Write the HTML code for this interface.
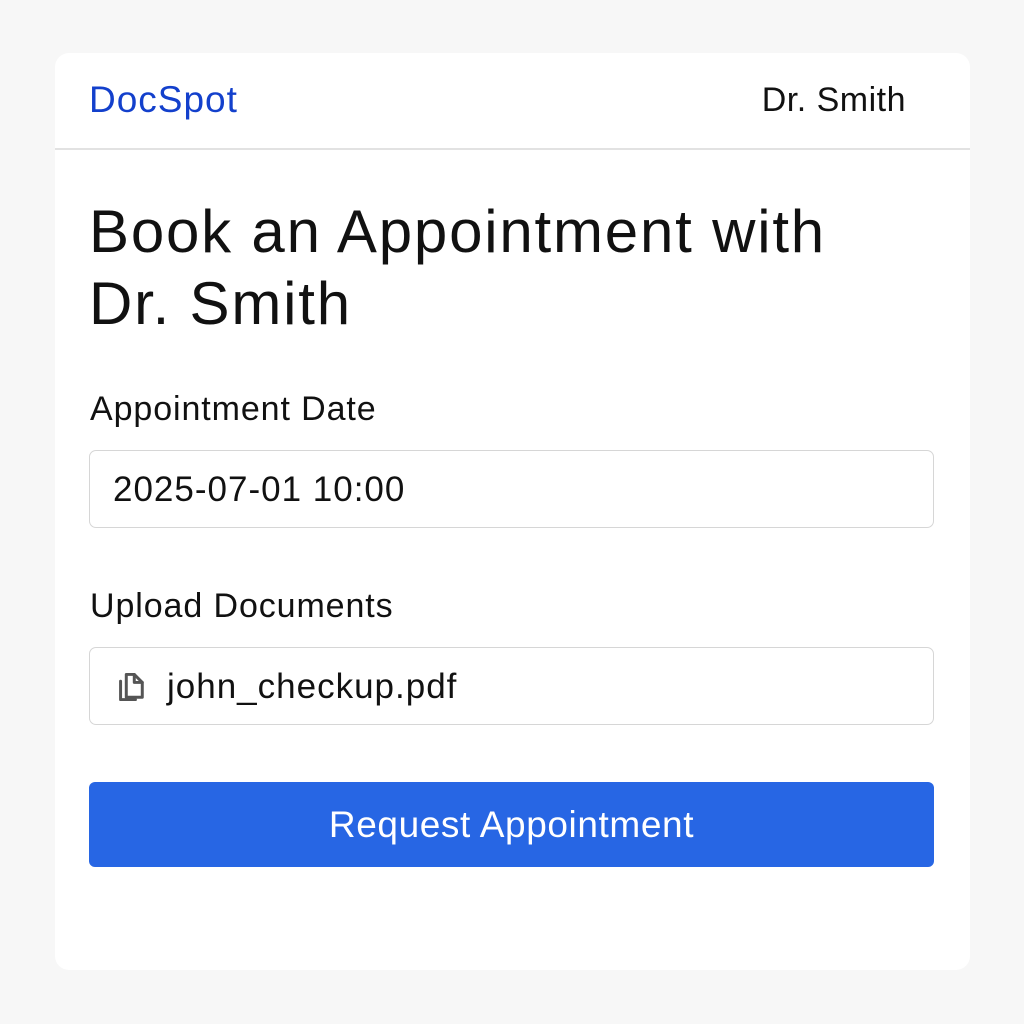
<!DOCTYPE html>
<html><head><style>
body{margin:0;width:1024px;height:1024px;background:#f7f7f7;font-family:"Liberation Sans",sans-serif;position:relative;overflow:hidden}
.card{position:absolute;left:55px;top:53px;width:915px;height:917px;background:#fff;border-radius:14px}
.hdr{position:absolute;left:0;top:0;width:915px;height:95px;border-bottom:2px solid #e2e2e2}
.logo{position:absolute;left:34px;top:26px;font-size:37px;letter-spacing:1px;color:#1340cc}
.user{position:absolute;right:64px;top:28px;font-size:34px;letter-spacing:0.5px;color:#111}
h1{position:absolute;left:34px;top:143px;margin:0;font-size:60px;font-weight:normal;line-height:72px;color:#111;letter-spacing:1.8px}
.lbl{position:absolute;left:35px;font-size:34px;letter-spacing:0.9px;color:#111}
.inp{position:absolute;left:34px;width:845px;height:78px;border:1px solid #d6d6d6;border-radius:7px;box-sizing:border-box;font-size:35px;letter-spacing:1px;color:#111}
.btn{position:absolute;left:34px;top:729px;width:845px;height:85px;background:#2766e4;border-radius:6px;color:#fff;font-size:37px;letter-spacing:0.6px;text-align:center;line-height:85px}
</style></head><body>
<div class="card">
<div class="hdr"><div class="logo">DocSpot</div><div class="user">Dr. Smith</div></div>
<h1>Book an Appointment with<br>Dr. Smith</h1>
<div class="lbl" style="top:337px">Appointment Date</div>
<div class="inp" style="top:397px;padding:19px 0 0 23px">2025-07-01 10:00</div>
<div class="lbl" style="top:534px">Upload Documents</div>
<div class="inp" style="top:594px;padding:19px 0 0 77px">
<svg style="position:absolute;left:26px;top:23px;width:32px;height:32px" viewBox="0 0 28 28" fill="none" stroke="#555" stroke-width="2.6" stroke-linejoin="round" stroke-linecap="round"><path d="M9 3h7l7 7v13H9z"/><path d="M16 3v7h7"/><path d="M4 9v16h13"/></svg>
john_checkup.pdf</div>
<div class="btn">Request Appointment</div>
</div>
</body></html>
